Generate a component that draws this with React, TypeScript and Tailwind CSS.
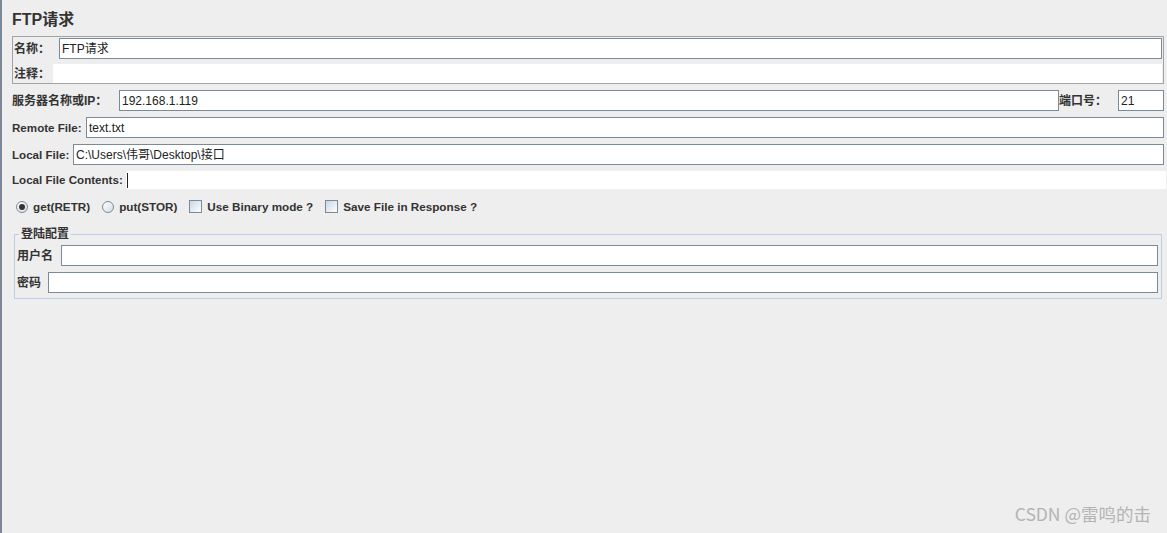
const font = "font-['Liberation_Sans','Noto_Sans_CJK_SC',sans-serif]";

function Field({ value, className = "" }: { value?: string; className?: string }) {
    return (
        <div className={`h-[21px] border border-[#7a8a99] bg-white pl-[2px] flex items-center text-[12px] text-[#222] ${className}`}>
            {value}
        </div>
    );
}

function Label({ text, className = "" }: { text: string; className?: string }) {
    return <div className={`shrink-0 font-bold text-[#333] whitespace-nowrap ${className}`}>{text}</div>;
}

function Radio({ checked }: { checked?: boolean }) {
    return (
        <div className="w-[12px] h-[12px] rounded-full border border-[#7a8a99] bg-gradient-to-br from-white to-[#d6dde6] flex items-center justify-center">
            {checked && <div className="w-[6px] h-[6px] rounded-full bg-[#333]" />}
        </div>
    );
}

function Checkbox() {
    return <div className="w-[13px] h-[13px] border border-[#7a8a99] bg-gradient-to-br from-[#c9d6e4] to-white" />;
}

export default function App() {
    return (
        <div className={`relative w-[1167px] h-[533px] bg-[#eeeeee] border-l-2 border-[#7d8694] pl-[10px] pr-[3px] ${font}`}>
            <div className="h-[36px] pt-[8px] text-[16px] font-bold text-[#333]">FTP请求</div>

            <div className="h-[48px] border border-[#a3a3a3] pl-[1px] pr-[1px] pt-[1px]">
                <div className="flex items-center h-[21px]">
                    <Label text="名称：" className="w-[45px] text-[12px]" />
                    <Field value="FTP请求" className="flex-1" />
                </div>
                <div className="flex items-center h-[19px] mt-[5px]">
                    <Label text="注释：" className="w-[39px] text-[12px]" />
                    <div className="flex-1 h-[19px] bg-white" />
                </div>
            </div>

            <div className="flex items-center mt-[6px]">
                <Label text="服务器名称或IP：" className="w-[107px] text-[12px]" />
                <Field value="192.168.1.119" className="flex-1" />
                <Label text="端口号：" className="w-[59px] text-[12px]" />
                <Field value="21" className="w-[46px]" />
            </div>

            <div className="flex items-center mt-[6px]">
                <Label text="Remote File:" className="w-[74px] text-[11.6px]" />
                <Field value="text.txt" className="flex-1" />
            </div>

            <div className="flex items-center mt-[6px]">
                <Label text="Local File:" className="w-[61px] text-[11.6px]" />
                <Field value="C:\Users\伟哥\Desktop\接口" className="flex-1" />
            </div>

            <div className="flex items-center mt-[6px]">
                <Label text="Local File Contents:" className="w-[114px] text-[11.6px]" />
                <div className="flex-1 h-[18px] bg-white mr-[-2px] flex items-center pl-[1px]">
                    <div className="w-px h-[15px] bg-[#222]" />
                </div>
            </div>

            <div className="flex items-center h-[19px] mt-[8px] pl-[4px] text-[11.7px] font-bold text-[#333]">
                <Radio checked />
                <span className="ml-[5px]">get(RETR)</span>
                <div className="ml-[12px]"><Radio /></div>
                <span className="ml-[5px]">put(STOR)</span>
                <div className="ml-[12px]"><Checkbox /></div>
                <span className="ml-[5px]">Use Binary mode ?</span>
                <div className="ml-[12px]"><Checkbox /></div>
                <span className="ml-[5px]">Save File in Response ?</span>
            </div>

            <div className="relative mt-[18px] ml-[2px] mr-[2px] h-[65px] border border-[#b8cfe5] pl-[2px] pr-[3px] pt-[10px]">
                <div className="absolute -top-[8px] left-[4px] px-[2px] bg-[#eeeeee] text-[12px] font-bold text-[#333] leading-[14px]">登陆配置</div>
                <div className="flex items-center">
                    <Label text="用户名" className="w-[44px] text-[12px]" />
                    <Field className="flex-1" />
                </div>
                <div className="flex items-center mt-[6px]">
                    <Label text="密码" className="w-[31px] text-[12px]" />
                    <Field className="flex-1" />
                </div>
            </div>

            <div className="absolute right-[16px] bottom-[6px] text-[17.5px] text-[#b4b4b4] font-['Noto_Sans_CJK_SC',sans-serif]">
                CSDN @雷鸣的击
            </div>
        </div>
    );
}
